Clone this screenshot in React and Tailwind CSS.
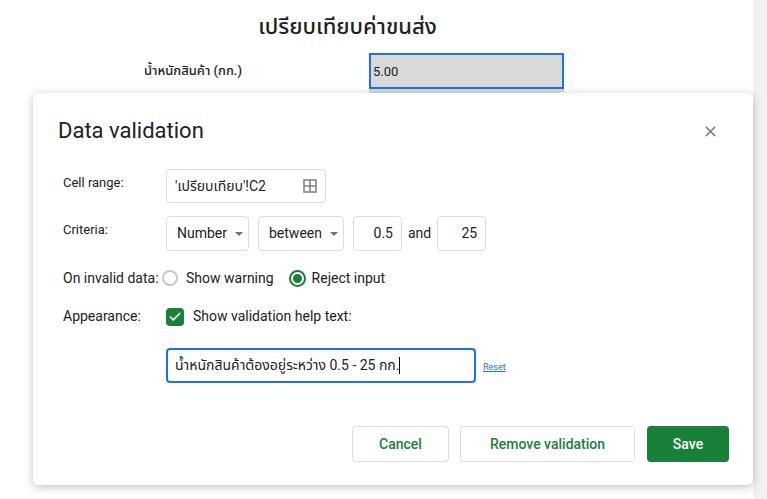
import { X, Check } from 'lucide-react';

const font = { fontFamily: 'Roboto, "Noto Sans", "Noto Sans Thai", sans-serif' };

function Caret() {
  return <span className="ml-2 inline-block border-x-[4px] border-t-[4px] border-x-transparent border-t-gray-500" />;
}

export default function App() {
  return (
    <div className="relative w-[767px] h-[499px] bg-white overflow-hidden text-[#202124]" style={font}>
      {/* sheet behind */}
      <div className="absolute right-0 top-0 h-full w-[14px] bg-[#f1f1f1]" />
      <div className="pt-[10px] text-center pr-[72px] text-[22px] font-medium">เปรียบเทียบค่าขนส่ง</div>
      <div className="flex items-start mt-[10px]">
        <div className="w-[242px] text-right text-[13px] font-medium pt-[8px]">น้ำหนักสินค้า (กก.)</div>
        <div className="ml-[127px] relative">
          <div className="w-[195px] h-[36px] bg-[#d9d9d9] border-2 border-[#1a73e8] text-[13px] pl-[2px] pt-[7px]">5.00</div>
          <div className="absolute right-[-3px] bottom-[-3px] w-[6px] h-[6px] bg-[#1a73e8] border border-white" />
          <div className="w-[195px] h-[6px] bg-[#d9d9d9]" />
        </div>
      </div>

      {/* dialog */}
      <div className="absolute left-[33px] top-[93px] w-[720px] h-[392px] bg-white rounded-md shadow-[0_2px_10px_rgba(0,0,0,0.25)] px-[25px] pt-[24px]">
        <div className="flex items-center justify-between">
          <div className="text-[22px] leading-[28px]">Data validation</div>
          <X size={17} className="text-gray-500 mr-[9px]" />
        </div>
        <div className="text-[13px] mt-[24px] pl-[5px] flex flex-col">
          <div className="flex items-start">
            <div className="w-[103px] pt-[4px]">Cell range:</div>
            <div className="w-[160px] h-[34px] border border-[#dadce0] rounded flex items-center justify-between px-[8px] text-[14px]">
              <span>'เปรียบเทียบ'!C2</span>
              <svg width="14" height="14" viewBox="0 0 14 14"><rect x="1" y="1" width="12" height="12" fill="none" stroke="#80868b" strokeWidth="1.6" /><path d="M7 1v12M1 7h12" stroke="#80868b" strokeWidth="1.6" /></svg>
            </div>
          </div>
          <div className="flex items-start mt-[13px]">
            <div className="w-[103px] pt-[4px]">Criteria:</div>
            <div className="flex items-center gap-[9px] text-[14px]">
              <div className="w-[83px] h-[35px] border border-[#dadce0] rounded flex items-center px-[10px]">Number<Caret /></div>
              <div className="w-[86px] h-[35px] border border-[#dadce0] rounded flex items-center px-[10px]">between<Caret /></div>
              <div className="w-[49px] h-[35px] border border-[#dadce0] rounded flex items-center justify-end px-[8px]">0.5</div>
              <span className="-mx-[3px]">and</span>
              <div className="w-[49px] h-[35px] border border-[#dadce0] rounded flex items-center justify-end px-[8px]">25</div>
            </div>
          </div>
          <div className="flex items-center mt-[15px] h-[24px] text-[14px]">
            <div className="w-[108px] -ml-[4px] pl-[4px]">On invalid data:</div>
            <div className="flex items-center gap-[8px] -ml-[5px]">
              <span className="w-[16px] h-[16px] rounded-full border-2 border-[#c7c7c7]" />
              <span>Show warning</span>
              <span className="ml-[7px] w-[17px] h-[17px] rounded-full border-2 border-[#188038] flex items-center justify-center"><span className="w-[9px] h-[9px] rounded-full bg-[#188038]" /></span>
              <span className="-ml-[2px]">Reject input</span>
            </div>
          </div>
          <div className="flex items-start mt-[16px] text-[14px]">
            <div className="w-[103px]">Appearance:</div>
            <div className="flex items-center gap-[9px]">
              <span className="w-[18px] h-[18px] rounded-sm bg-[#188038] flex items-center justify-center"><Check size={14} strokeWidth={3} className="text-white" /></span>
              <span>Show validation help text:</span>
            </div>
          </div>
          <div className="flex items-end mt-[21px] ml-[103px]">
            <div className="w-[310px] h-[35px] border-2 border-[#1a73e8] rounded flex items-center px-[7px] text-[14px]">
              น้ำหนักสินค้าต้องอยู่ระหว่าง 0.5 - 25 กก.<span className="w-px h-[17px] bg-black" />
            </div>
            <span className="ml-[7px] mb-[9px] text-[9px] text-[#1a73e8] underline">Reset</span>
          </div>
        </div>
        <div className="flex justify-end gap-[11px] mt-[43px] mr-[-1px] text-[14px] font-medium">
          <div className="w-[97px] h-[36px] border border-[#dadce0] rounded flex items-center justify-center text-[#188038]">Cancel</div>
          <div className="w-[175px] h-[36px] border border-[#dadce0] rounded flex items-center justify-center text-[#188038]">Remove validation</div>
          <div className="w-[82px] h-[36px] rounded bg-[#188038] flex items-center justify-center text-white ml-[1px]">Save</div>
        </div>
      </div>
    </div>
  );
}
